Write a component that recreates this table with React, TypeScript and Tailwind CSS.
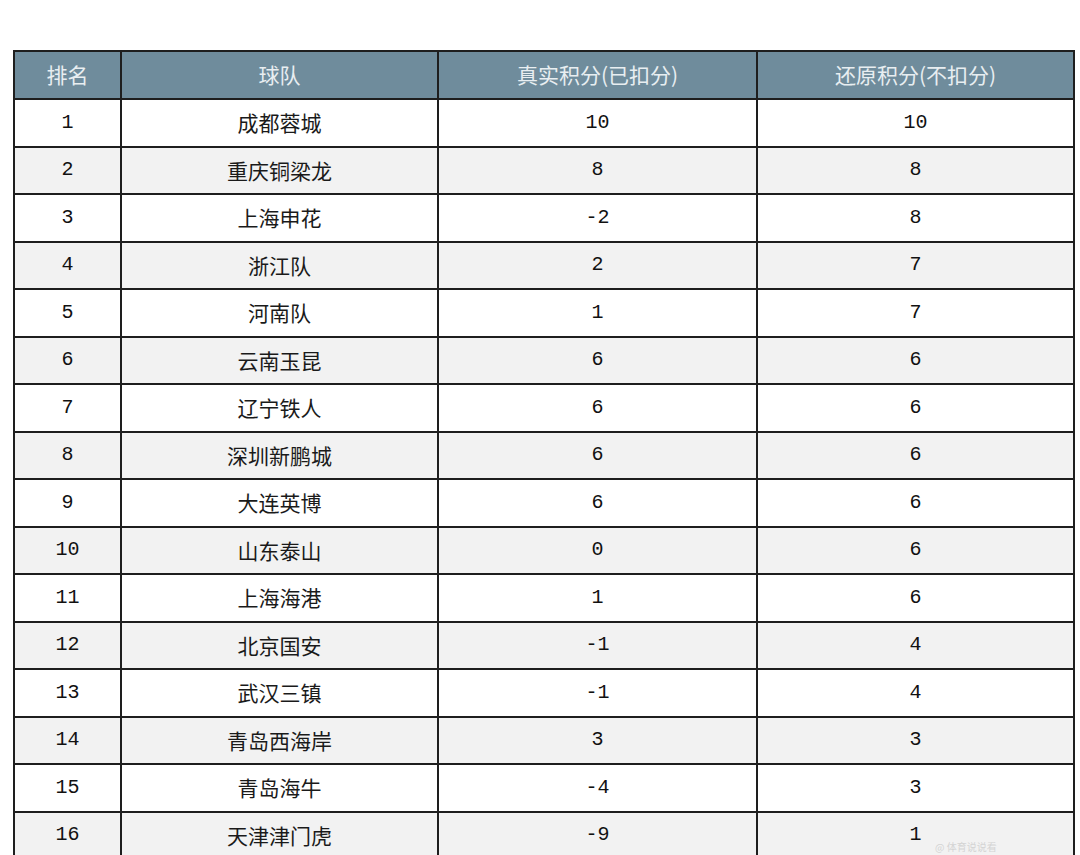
const rows: [number, string, number, number][] = [
  [1, "成都蓉城", 10, 10],
  [2, "重庆铜梁龙", 8, 8],
  [3, "上海申花", -2, 8],
  [4, "浙江队", 2, 7],
  [5, "河南队", 1, 7],
  [6, "云南玉昆", 6, 6],
  [7, "辽宁铁人", 6, 6],
  [8, "深圳新鹏城", 6, 6],
  [9, "大连英博", 6, 6],
  [10, "山东泰山", 0, 6],
  [11, "上海海港", 1, 6],
  [12, "北京国安", -1, 4],
  [13, "武汉三镇", -1, 4],
  [14, "青岛西海岸", 3, 3],
  [15, "青岛海牛", -4, 3],
  [16, "天津津门虎", -9, 1],
];

const cjk = "font-['Noto_Sans_CJK_SC',sans-serif]";
const mono = "font-['Liberation_Mono','DejaVu_Sans_Mono',monospace]";

export default function App() {
  return (
    <div className="relative h-[855px] w-[1080px] overflow-hidden bg-white pt-[50px]">
      <table className="ml-[13px] w-[1060px] table-fixed border-collapse">
        <colgroup>
          <col className="w-[107px]" />
          <col className="w-[317px]" />
          <col className="w-[319px]" />
          <col className="w-[317px]" />
        </colgroup>
        <thead>
          <tr className={`h-[48px] bg-[#6f8c9c] text-[21px] text-[#e8eef1] ${cjk}`}>
            <th className="border-2 border-[#1e1e1e] font-normal">排名</th>
            <th className="border-2 border-[#1e1e1e] font-normal">球队</th>
            <th className="border-2 border-[#1e1e1e] font-normal">真实积分(已扣分)</th>
            <th className="border-2 border-[#1e1e1e] font-normal">还原积分(不扣分)</th>
          </tr>
        </thead>
        <tbody>
          {rows.map(([rank, team, real, orig]) => (
            <tr
              key={rank}
              className={`h-[47.5px] text-[#1a1a1a] ${rank % 2 === 0 ? "bg-[#f2f2f2]" : "bg-white"}`}
            >
              <td className={`border-2 border-[#1e1e1e] text-center text-[20px] text-[#111] ${mono}`}>{rank}</td>
              <td className={`border-2 border-[#1e1e1e] text-center text-[21px] ${cjk}`}>{team}</td>
              <td className={`border-2 border-[#1e1e1e] text-center text-[20px] text-[#111] ${mono}`}>{real}</td>
              <td className={`border-2 border-[#1e1e1e] text-center text-[20px] text-[#111] ${mono}`}>{orig}</td>
            </tr>
          ))}
        </tbody>
      </table>
      <div className={`absolute left-[935px] top-[842px] text-[10px] leading-[10px] text-[#d4d4d4] ${cjk}`}>
        @ 体育说说看
      </div>
    </div>
  );
}
